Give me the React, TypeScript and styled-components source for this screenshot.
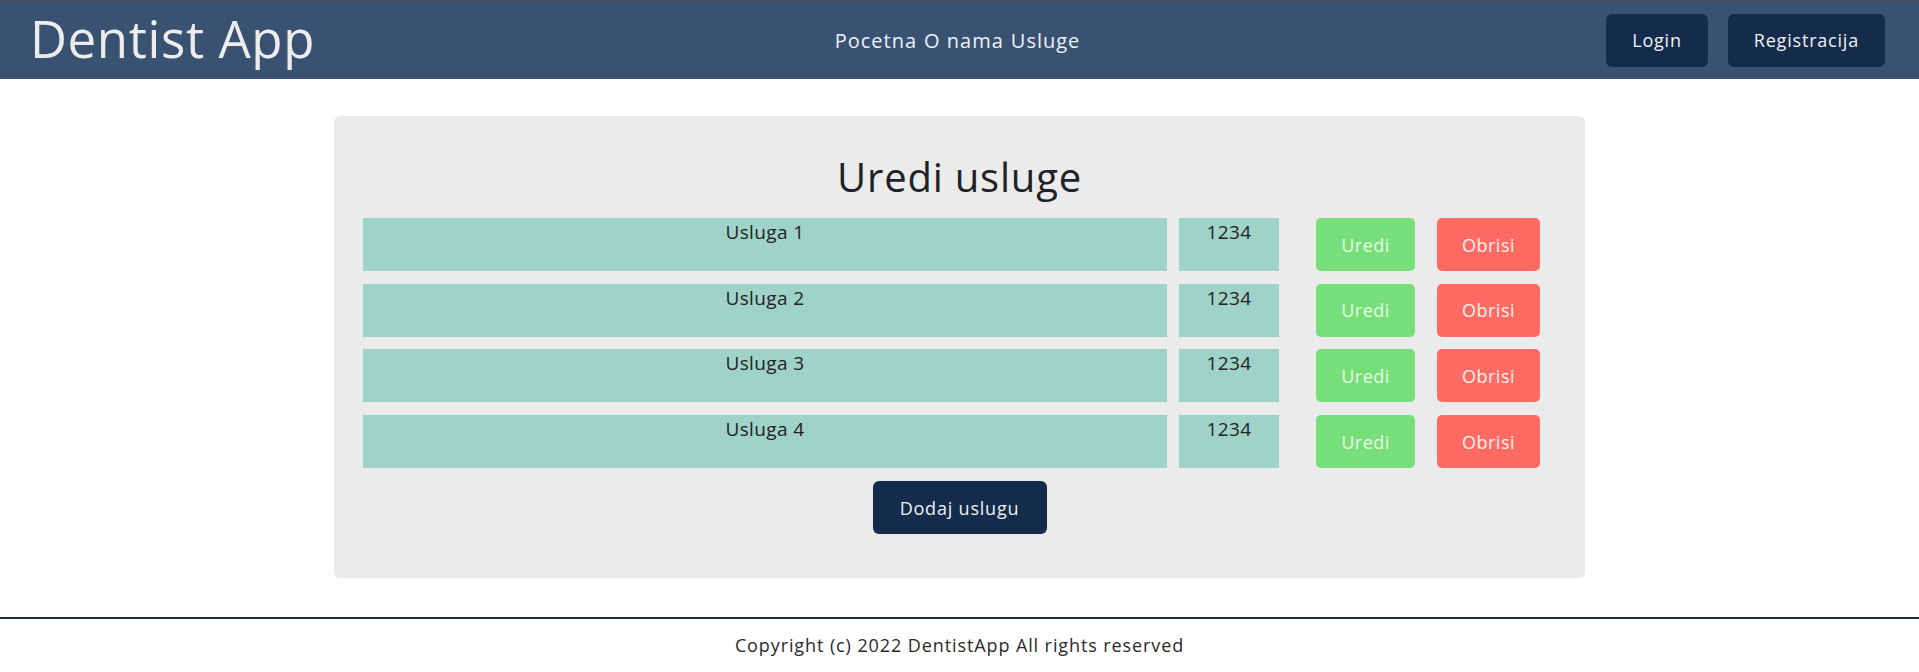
import styled, { createGlobalStyle } from 'styled-components'

const GlobalStyle = createGlobalStyle`
  body {
    margin: 0;
    font-family: 'Open Sans', 'Noto Sans', sans-serif;
    background: #ffffff;
    color: #222;
  }
`

const Header = styled.header`
  display: grid;
  grid-template-columns: 1fr auto 1fr;
  align-items: center;
  height: 78px;
  border-top: 1px solid #4e4e4e;
  background: #395272;
  padding: 0 34px 0 30px;
`

const Logo = styled.div`
  font-size: 51px;
  color: #ececec;
  letter-spacing: 0.6px;
  line-height: 1;
  padding-bottom: 4px;
`

const Nav = styled.nav`
  display: flex;
  gap: 7px;
  font-size: 20px;
  color: #eef2f6;
  letter-spacing: 1px;
`

const NavLink = styled.span`
  cursor: pointer;
`

const AuthGroup = styled.div`
  display: flex;
  justify-content: flex-end;
  gap: 20px;
`

const DarkButton = styled.button`
  height: 53px;
  padding: 0 26px;
  border: none;
  border-radius: 6px;
  background: #152b4b;
  color: #eef2f6;
  font-family: inherit;
  font-size: 18px;
  letter-spacing: 0.8px;
  cursor: pointer;
`

const Main = styled.main`
  display: flex;
  justify-content: center;
  padding-top: 37px;
`

const Card = styled.section`
  width: 1251px;
  box-sizing: border-box;
  background: #ebebeb;
  border-radius: 6px;
  padding: 33px 29px 44px;
  display: flex;
  flex-direction: column;
  align-items: center;
`

const Title = styled.h1`
  margin: 0 0 13px;
  font-size: 40px;
  font-weight: 400;
  line-height: 56px;
  color: #1f2328;
  letter-spacing: 0.8px;
`

const List = styled.div`
  display: flex;
  flex-direction: column;
  gap: 12.7px;
  align-self: stretch;
`

const Row = styled.div`
  display: flex;
  height: 53px;
`

const Cell = styled.div<{ $width: number }>`
  width: ${(p) => p.$width}px;
  margin-right: 12px;
  background: #a0d3c7;
  text-align: center;
  font-size: 19px;
  line-height: 28px;
  color: #222;
  letter-spacing: 0.4px;
`

const ActionButton = styled.button<{ $variant: 'edit' | 'delete' }>`
  width: ${(p) => (p.$variant === 'edit' ? 99 : 103)}px;
  margin-left: ${(p) => (p.$variant === 'edit' ? 25 : 22)}px;
  height: 53px;
  border: none;
  border-radius: 5px;
  background: ${(p) => (p.$variant === 'edit' ? '#77df79' : '#ff6b63')};
  color: ${(p) => (p.$variant === 'edit' ? '#e8f8e6' : '#fff1ef')};
  font-family: inherit;
  font-size: 18px;
  letter-spacing: 0.5px;
  cursor: pointer;
`

const AddButton = styled(DarkButton)`
  margin-top: 13px;
  width: 174px;
  padding: 0;
`

const Footer = styled.footer`
  margin-top: 39px;
  border-top: 2px solid #1b2a40;
  text-align: center;
  font-size: 18px;
  color: #2a2a2a;
  padding: 14px 0;
  letter-spacing: 0.9px;
`

const services = [
  { name: 'Usluga 1', price: 1234 },
  { name: 'Usluga 2', price: 1234 },
  { name: 'Usluga 3', price: 1234 },
  { name: 'Usluga 4', price: 1234 },
]

function App() {
  return (
    <>
      <GlobalStyle />
      <Header>
        <Logo>Dentist App</Logo>
        <Nav>
          <NavLink>Pocetna</NavLink>
          <NavLink>O nama</NavLink>
          <NavLink>Usluge</NavLink>
        </Nav>
        <AuthGroup>
          <DarkButton>Login</DarkButton>
          <DarkButton>Registracija</DarkButton>
        </AuthGroup>
      </Header>
      <Main>
        <Card>
          <Title>Uredi usluge</Title>
          <List>
            {services.map((s) => (
              <Row key={s.name}>
                <Cell $width={804}>{s.name}</Cell>
                <Cell $width={100}>{s.price}</Cell>
                <ActionButton $variant="edit">Uredi</ActionButton>
                <ActionButton $variant="delete">Obrisi</ActionButton>
              </Row>
            ))}
          </List>
          <AddButton>Dodaj uslugu</AddButton>
        </Card>
      </Main>
      <Footer>Copyright (c) 2022 DentistApp All rights reserved</Footer>
    </>
  )
}

export default App
